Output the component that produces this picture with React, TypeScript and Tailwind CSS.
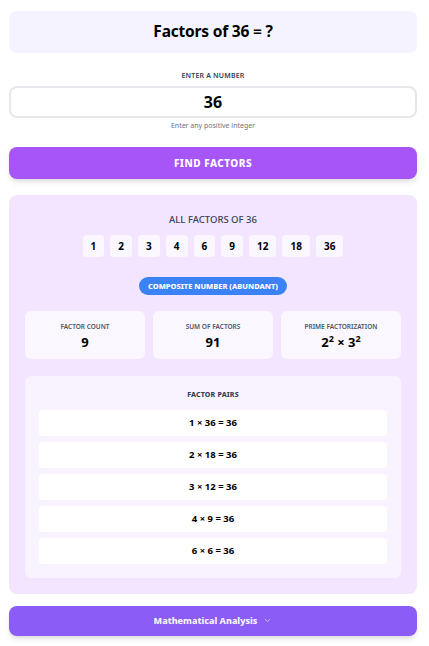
import { ChevronDown } from 'lucide-react'

const factors = [1, 2, 3, 4, 6, 9, 12, 18, 36]
const pairs = [
  [1, 36],
  [2, 18],
  [3, 12],
  [4, 9],
  [6, 6],
]

export default function App() {
  return (
    <div
      className="min-h-screen bg-white pl-[9px] pr-[12px] pt-[11px] text-black"
      style={{ fontFamily: '"Noto Sans", "Open Sans", sans-serif' }}
    >
      <div className="flex h-[42px] items-center justify-center rounded-lg bg-[#f5f3ff]">
        <h1 className="text-[15.5px] font-bold tracking-[-0.2px]">
          Factors of 36 <span className="font-semibold">=</span> ?
        </h1>
      </div>

      <div className="mt-[18px] flex flex-col items-center">
        <label className="text-[7px] font-semibold tracking-wide text-gray-700">ENTER A NUMBER</label>
        <div className="mt-[4px] flex h-[32px] w-full items-center justify-center rounded-lg border-2 border-gray-200 bg-white">
          <span className="text-[16px] font-bold">36</span>
        </div>
        <p className="mt-[3px] text-[7px] text-gray-500">Enter any positive integer</p>
      </div>

      <button className="mt-[16px] flex h-[32px] w-full items-center justify-center rounded-lg bg-[#a855f7] text-[10px] font-extrabold tracking-wider text-white shadow-md">
        FIND FACTORS
      </button>

      <div className="mt-[16px] flex flex-col items-center rounded-lg bg-[#f3e5ff] px-4 pb-4 pt-[18px]">
        <h2 className="text-[9.5px] font-medium text-gray-700">ALL FACTORS OF 36</h2>
        <div className="mt-[8px] flex gap-[6px]">
          {factors.map((f) => (
            <span
              key={f}
              className="flex h-[22px] min-w-[21px] items-center justify-center rounded-[4px] bg-[#faf7ff] px-[8px] text-[10px] font-bold"
            >
              {f}
            </span>
          ))}
        </div>

        <span className="mt-[20px] flex h-[18px] items-center rounded-full bg-[#3b82f6] px-[9px] text-[7.5px] font-extrabold text-white">
          COMPOSITE NUMBER (ABUNDANT)
        </span>

        <div className="mt-[16px] grid w-full grid-cols-3 gap-2">
          {[
            ['FACTOR COUNT', <>9</>],
            ['SUM OF FACTORS', <>91</>],
            [
              'PRIME FACTORIZATION',
              <>
                2<sup className="text-[9px]">2</sup> × 3<sup className="text-[9px]">2</sup>
              </>,
            ],
          ].map(([label, value], i) => (
            <div key={i} className="flex h-[48px] flex-col items-center justify-center rounded-md bg-[#faf7ff]">
              <span className="text-[6.5px] font-semibold text-gray-600">{label}</span>
              <span className="mt-[4px] text-[13px] font-bold leading-none">{value}</span>
            </div>
          ))}
        </div>

        <div className="mt-[17px] flex w-full flex-col items-center rounded-md bg-[#f9f3ff] px-[14px] pb-[14px] pt-[14px]">
          <h3 className="text-[7px] font-extrabold tracking-wide text-gray-700">FACTOR PAIRS</h3>
          <div className="mt-[9px] flex w-full flex-col gap-[6px]">
            {pairs.map(([a, b]) => (
              <div key={a} className="flex h-[26px] items-center justify-center rounded-[4px] bg-white text-[9.5px] font-bold">
                {a} × {b} = 36
              </div>
            ))}
          </div>
        </div>
      </div>

      <button className="mt-[12px] flex h-[30px] w-full items-center justify-center gap-[6px] rounded-lg bg-[#8b5cf6] text-[9px] font-extrabold text-[#f5f3ff] shadow-md">
        Mathematical Analysis
        <ChevronDown size={9} strokeWidth={2} className="text-violet-200" />
      </button>
    </div>
  )
}
